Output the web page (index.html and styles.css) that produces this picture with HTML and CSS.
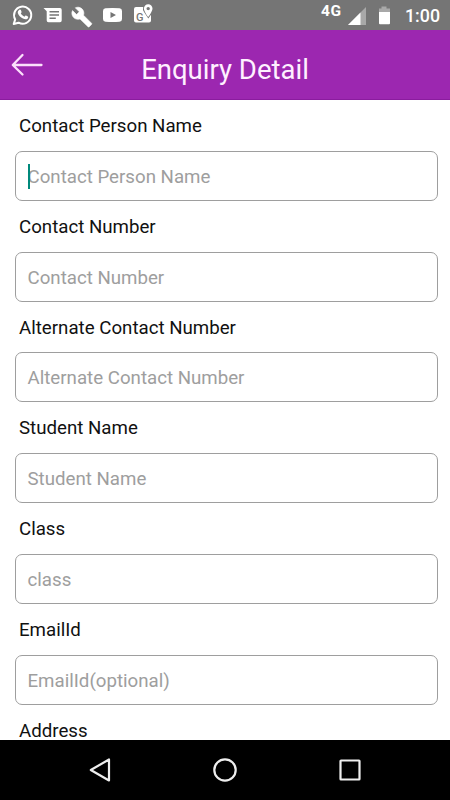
FILE: index.html
```html
<!DOCTYPE html>
<html lang="en">
<head>
<meta charset="utf-8">
<title>Enquiry Detail</title>
<link rel="stylesheet" href="styles.css">
</head>
<body>
<div class="screen">
  <div class="status">
    <svg class="tray" width="160" height="30" viewBox="0 0 160 30" fill="#fff">
      <path d="M13.7 24 15.2 19.4A8.6 8.6 0 1 1 18.6 22.7Z" fill="none" stroke="#fff" stroke-width="2" stroke-linejoin="round"/>
      <path d="M19.3 9.8c.7-.5 1.3-.4 1.6.3l.7 1.8c.1.5-.5 1-.8 1.4.9 1.7 2 2.700 3.700 3.400.5-.5.9-1.300 1.500-1.100l1.900.9c.6.4.3 1.300-.2 1.900-1.200 1.200-2.800 1.100-4.800.2-2.400-1.100-4.400-3.400-5-5.300-.4-1.500.3-2.800 1.400-3.500Z"/>
      <path fill-rule="evenodd" d="M43.500 8H60a1.700 1.700 0 0 1 1.700 1.700V20.500A1.700 1.700 0 0 1 60 22.200H48.500A1.800 1.800 0 0 1 46.700 20.400V11.300ZM49.500 11v1.500h9.500V11Zm0 3.200v1.500h9.500v-1.500Zm0 3.200v1.500h6.300v-1.500Z"/>
      <path transform="translate(0 1)" stroke="#fff" stroke-width=".6" d="m91.500 22.200-8-8c.8-2.100.3-4.500-1.300-6.200-1.900-1.900-4.700-2.300-6.900-1.200l4 4-2.700 2.800-4.100-4c-1.200 2.200-.7 5.100 1.200 7 1.700 1.700 4.200 2.100 6.300 1.300l8 7.800c.4.400.9.400 1.300 0l2.100-2.100c.5-.4.500-1 .1-1.400Z"/>
      <path fill-rule="evenodd" d="M105.500 8.200Q112.500 7.600 119.500 8.200Q122 8.500 122 11V19Q122 21.500 119.500 21.800Q112.500 22.400 105.500 21.800Q103 21.500 103 19V11Q103 8.500 105.500 8.200ZM110.500 12v6l5.500-3Z"/>
      <path d="M136 7h7.200a6 6 0 0 0 .8 5l4.300 6.500 2.700-3.800V20.500a2 2 0 0 1-2 2H136a2 2 0 0 1-2-2V9a2 2 0 0 1 2-2Z"/>
      <path fill-rule="evenodd" d="M148.200 4.300a4.300 4.300 0 0 1 4.300 4.300c0 3-4.300 8.600-4.300 8.600s-4.300-5.600-4.300-8.600a4.300 4.300 0 0 1 4.300-4.300Zm0 2.600a1.700 1.700 0 1 0 0 3.400 1.700 1.700 0 0 0 0-3.400Z"/>
      <text class="map-letter" x="136" y="21">G</text>
    </svg>
    <div class="system">
      <span class="network">4G</span>
      <svg width="46" height="30" viewBox="0 0 46 30">
        <path d="M18 7V25H0Z" fill="#a8a8a8"/>
        <path d="M12.500 12.500V25H0Z" fill="#fff"/>
        <path d="M31 8.500h2.500V6.500h5v2H42v4H31Z" fill="#a8a8a8"/>
        <path d="M31 12h11v11.200a1 1 0 0 1-1 1h-9a1 1 0 0 1-1-1Z" fill="#fff"/>
      </svg>
      <span class="clock">1:00</span>
    </div>
  </div>
  <header class="bar">
    <svg class="back" width="32" height="24" viewBox="0 0 32 24" fill="none" stroke="#fbe0fb" stroke-width="2.300" stroke-linecap="round" stroke-linejoin="round"><path d="M30.500 12H2M11.500 2 1.800 12l9.700 9.500"/></svg>
    <h1>Enquiry Detail</h1>
  </header>
  <main class="form">
    <label><span class="name">Contact Person Name</span><span class="field focused">Contact Person Name</span></label>
    <label><span class="name">Contact Number</span><span class="field">Contact Number</span></label>
    <label><span class="name">Alternate Contact Number</span><span class="field">Alternate Contact Number</span></label>
    <label><span class="name">Student Name</span><span class="field">Student Name</span></label>
    <label><span class="name">Class</span><span class="field">class</span></label>
    <label><span class="name">EmailId</span><span class="field">EmailId(optional)</span></label>
    <label><span class="name">Address</span></label>
  </main>
  <nav class="nav">
    <svg width="24" height="26" viewBox="0 0 24 26"><path d="M21 2.500v21L2.800 13Z"/></svg>
    <svg width="26" height="26" viewBox="0 0 26 26"><circle cx="13" cy="13" r="10.700"/></svg>
    <svg width="24" height="26" viewBox="0 0 24 26"><rect x="2.500" y="3.500" width="19" height="19" rx=".5"/></svg>
  </nav>
</div>
</body>
</html>
```
FILE: styles.css
```css
* { box-sizing: border-box; }
body { margin: 0; font-family: Roboto, "Liberation Sans", sans-serif; background: #fff; }
.screen { width: 450px; height: 800px; display: flex; flex-direction: column; overflow: hidden; }
svg { display: block; flex: none; }
.status { height: 30px; flex: none; background: #757575; display: flex; justify-content: space-between; color: #fff; }
.map-letter { font: 500 11px Roboto, sans-serif; fill: #757575; }
.system { display: flex; padding-right: 10px; }
.network { font-size: 15.500px; line-height: 23px; font-weight: 700; letter-spacing: .8px; margin-right: 6px; }
.clock { font-size: 17.800px; line-height: 32px; font-weight: 500; margin-left: 11px; }
.bar { height: 70px; flex: none; background: #9c27b0; border-bottom: 1px solid #8a1c9e; display: grid; grid-template-columns: 50px 1fr 50px; align-items: center; }
.back { margin: 0 0 0 11px; }
h1 { margin: 10px 0 0; font-size: 27.500px; line-height: 34px; font-weight: 400; color: #fff0ff; text-align: center; white-space: nowrap; }
.form { flex: 1; min-height: 0; overflow: hidden; padding: 0 12.500px 0 15px; }
label { display: block; }
.name { display: block; height: 50.800px; padding-left: 4px; font-size: 18.700px; line-height: 53px; color: #111; }
.field { display: block; height: 50px; border: 1.500px solid #9e9e9e; border-radius: 7px; padding-left: 11.500px; font-size: 18.700px; line-height: 50px; color: #9e9e9e; position: relative; }
.focused::before { content: ""; position: absolute; left: 12px; top: 12px; width: 2px; height: 25px; background: #00897b; }
.nav { height: 60px; flex: none; background: #000; display: flex; justify-content: space-between; align-items: center; padding: 0 88px; }
.nav svg { fill: none; stroke: #eee; stroke-width: 2.200; stroke-linejoin: round; }
```
